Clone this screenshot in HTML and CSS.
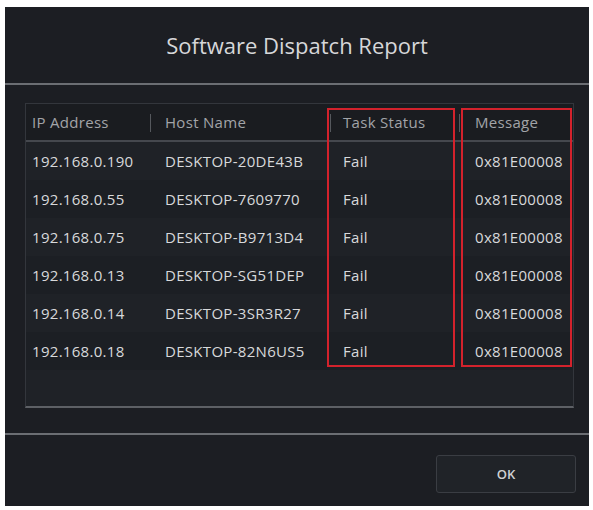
FILE: index.html
```html
<!DOCTYPE html>
<html>
<head>
<meta charset="utf-8">
<link rel="stylesheet" href="styles.css">
</head>
<body>
<div class="dialog">
  <div class="title">Software Dispatch Report</div>
  <div class="rule"></div>
  <div class="content">
    <div class="table">
      <div class="row head">
        <div class="cell c1">IP Address</div>
        <div class="cell c2 div">Host Name</div>
        <div class="cell c3 div">Task Status</div>
        <div class="cell c4 div">Message</div>
      </div>
      <div class="row">
        <div class="cell c1">192.168.0.190</div>
        <div class="cell c2">DESKTOP-20DE43B</div>
        <div class="cell c3">Fail</div>
        <div class="cell c4">0x81E00008</div>
      </div>
      <div class="row alt">
        <div class="cell c1">192.168.0.55</div>
        <div class="cell c2">DESKTOP-7609770</div>
        <div class="cell c3">Fail</div>
        <div class="cell c4">0x81E00008</div>
      </div>
      <div class="row">
        <div class="cell c1">192.168.0.75</div>
        <div class="cell c2">DESKTOP-B9713D4</div>
        <div class="cell c3">Fail</div>
        <div class="cell c4">0x81E00008</div>
      </div>
      <div class="row alt">
        <div class="cell c1">192.168.0.13</div>
        <div class="cell c2">DESKTOP-SG51DEP</div>
        <div class="cell c3">Fail</div>
        <div class="cell c4">0x81E00008</div>
      </div>
      <div class="row">
        <div class="cell c1">192.168.0.14</div>
        <div class="cell c2">DESKTOP-3SR3R27</div>
        <div class="cell c3">Fail</div>
        <div class="cell c4">0x81E00008</div>
      </div>
      <div class="row alt">
        <div class="cell c1">192.168.0.18</div>
        <div class="cell c2">DESKTOP-82N6US5</div>
        <div class="cell c3">Fail</div>
        <div class="cell c4">0x81E00008</div>
      </div>
      <div class="mark mark-status"></div>
      <div class="mark mark-message"></div>
    </div>
  </div>
  <div class="rule"></div>
  <div class="footer">
    <button class="ok">OK</button>
  </div>
</div>
</body>
</html>
```

FILE: styles.css
```css
html, body {
  margin: 0;
  padding: 0;
  background: #ffffff;
}
body {
  padding: 7px 4px 4px 5px;
  font-family: "Open Sans", "Noto Sans", sans-serif;
}
.dialog {
  width: 584px;
  height: 499px;
  background: #1c1e23;
  display: flex;
  flex-direction: column;
}
.title {
  height: 76px;
  display: flex;
  align-items: center;
  justify-content: center;
  color: #d6d7d9;
  font-size: 22px;
  padding-bottom: 1px;
  box-sizing: border-box;
}
.rule {
  height: 2px;
  background: #6b6e73;
}
.content {
  height: 348px;
  padding: 18px 15px 0 20px;
  box-sizing: border-box;
}
.table {
  position: relative;
  height: 305px;
  box-sizing: border-box;
  border: 1px solid #33363c;
  border-bottom: 2px solid #5d6065;
  background: #1f2227;
}
.row {
  display: grid;
  grid-template-columns: 124px 180px 129px 1fr;
  height: 38px;
  align-items: center;
  color: #d8d9db;
  font-size: 15px;
  letter-spacing: 0.3px;
}
.row.alt {
  background: #1c1f24;
}
.row.head {
  height: 38px;
  background: #1a1c20;
  border-bottom: 2px solid #45484e;
  color: #a2a4a8;
  box-sizing: border-box;
}
.cell {
  position: relative;
  white-space: nowrap;
}
.c1 { padding-left: 6px; }
.c2 { padding-left: 15px; }
.c3 { padding-left: 13px; }
.c4 { padding-left: 16px; }
.cell.div::before {
  content: "";
  position: absolute;
  left: 0;
  top: 2px;
  bottom: 0;
  width: 1px;
  background: #55585d;
}
.mark {
  position: absolute;
  top: 4px;
  height: 259px;
  border: 2px solid #d3222c;
  box-sizing: border-box;
}
.mark-status {
  left: 301px;
  width: 128px;
}
.mark-message {
  left: 435px;
  width: 111px;
}
.footer {
  flex: 1;
  display: flex;
  justify-content: flex-end;
  align-items: flex-start;
  padding: 20px 13px 0 0;
}
.ok {
  width: 140px;
  height: 38px;
  background: #202328;
  border: 1px solid #3a3d43;
  border-radius: 3px;
  color: #cfd0d2;
  font-family: "Open Sans", sans-serif;
  font-size: 13px;
  font-weight: 600;
}
```
